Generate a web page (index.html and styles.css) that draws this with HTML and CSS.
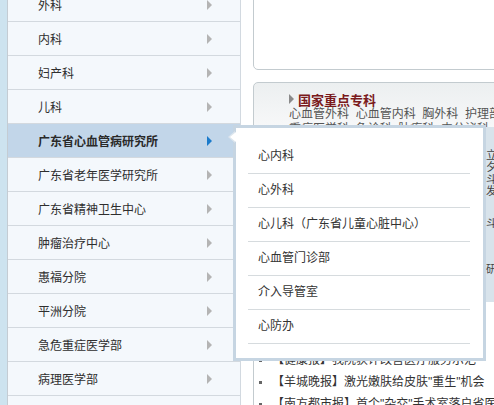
FILE: index.html
```html
<!DOCTYPE html>
<html lang="zh-CN">
<head>
<meta charset="utf-8">
<title>科室导航</title>
<link rel="stylesheet" href="styles.css">
</head>
<body>
<div class="page">
  <aside class="sidebar">
    <div class="strip"></div>
    <ul class="menu">
      <li class="item"><span>外科</span><i class="arrow"></i></li>
      <li class="item"><span>内科</span><i class="arrow"></i></li>
      <li class="item"><span>妇产科</span><i class="arrow"></i></li>
      <li class="item"><span>儿科</span><i class="arrow"></i></li>
      <li class="item active"><span>广东省心血管病研究所</span><i class="arrow"></i></li>
      <li class="item"><span>广东省老年医学研究所</span><i class="arrow"></i></li>
      <li class="item"><span>广东省精神卫生中心</span><i class="arrow"></i></li>
      <li class="item"><span>肿瘤治疗中心</span><i class="arrow"></i></li>
      <li class="item"><span>惠福分院</span><i class="arrow"></i></li>
      <li class="item"><span>平洲分院</span><i class="arrow"></i></li>
      <li class="item"><span>急危重症医学部</span><i class="arrow"></i></li>
      <li class="item"><span>病理医学部</span><i class="arrow"></i></li>
      <li class="item"><span></span></li>
    </ul>
  </aside>

  <main class="main">
    <div class="box box-top"></div>
    <div class="box box-feature">
      <div class="feature-head">
        <h3 class="feature-title"><i class="title-arrow"></i>国家重点专科</h3>
        <p class="feature-line">心血管外科&nbsp;&nbsp;心血管内科&nbsp;&nbsp;胸外科&nbsp;&nbsp;护理部</p>
        <p class="feature-line">重症医学科&nbsp;&nbsp;急诊科&nbsp;&nbsp;肿瘤科&nbsp;&nbsp;内分泌科</p>
      </div>
      <div class="feature-body">
        <div class="feature-left"></div>
        <div class="feature-side">
          <p class="side-a">立</p>
          <p class="side-a">夕</p>
          <p class="side-a">斗</p>
          <p class="side-a">发</p>
          <p class="side-b">斗</p>
          <p class="side-c">研</p>
        </div>
      </div>
      <ul class="news">
        <li>【健康报】我院获评改善医疗服务示范</li>
        <li>【羊城晚报】激光嫩肤给皮肤"重生"机会</li>
        <li>【南方都市报】首个"杂交"手术室落户省医</li>
      </ul>
    </div>
  </main>

  <div class="popup">
    <ul class="sub">
      <li>心内科</li>
      <li>心外科</li>
      <li>心儿科（广东省儿童心脏中心）</li>
      <li>心血管门诊部</li>
      <li>介入导管室</li>
      <li>心防办</li>
    </ul>
  </div>
</div>
</body>
</html>
```
FILE: styles.css
```css
html, body {
  margin: 0;
  padding: 0;
  background: #ffffff;
}
body {
  font-family: "Liberation Sans", "Noto Sans CJK SC", sans-serif;
  font-size: 12px;
  color: #333333;
  width: 494px;
  height: 405px;
  overflow: hidden;
}
ul, p, h3 {
  margin: 0;
  padding: 0;
  list-style: none;
}
.page {
  position: relative;
  display: flex;
  width: 494px;
  height: 405px;
  overflow: hidden;
}

/* sidebar */
.sidebar {
  flex: none;
  display: flex;
  width: 241px;
}
.strip {
  width: 7px;
  background: #cde3ef;
  border-right: 1px solid #c4ccd3;
}
.menu {
  width: 232px;
  margin-top: -12px;
  border-right: 1px solid #d2d9e0;
  background: #f4f8fc;
}
.item {
  display: flex;
  align-items: center;
  justify-content: space-between;
  height: 33px;
  padding: 0 28px 0 30px;
  border-bottom: 1px solid #d3d9df;
  background: #f4f8fc;
  font-size: 12px;
  color: #2e2e2e;
}
.arrow {
  display: block;
  width: 0;
  height: 0;
  border-left: 5px solid #b4b4b4;
  border-top: 5px solid transparent;
  border-bottom: 5px solid transparent;
}
.item.active {
  background: #c2d6e9;
  font-weight: bold;
  color: #2a2a2a;
}
.item.active .arrow {
  border-left-color: #1b7bcb;
}

/* main */
.main {
  flex: 1;
  margin-left: 12px;
  margin-right: -12px;
}
.box {
  border: 1px solid #c3cbcf;
  border-radius: 5px;
  background: #ffffff;
}
.box-top {
  height: 80px;
  margin-top: -10px;
  box-sizing: border-box;
}
.box-feature {
  margin-top: 12px;
  height: 360px;
  background: linear-gradient(180deg, #eceff0 0px, #f6f7f8 40px, #ffffff 60px);
}
.feature-head {
  padding: 8px 0 0 35px;
}
.feature-title {
  display: flex;
  align-items: center;
  gap: 4px;
  height: 16px;
  font-size: 13px;
  font-weight: bold;
  color: #7a1a1c;
}
.title-arrow {
  display: block;
  width: 0;
  height: 0;
  border-left: 5px solid #8a8a8a;
  border-top: 5px solid transparent;
  border-bottom: 5px solid transparent;
}
.feature-line {
  line-height: 15px;
  font-size: 12px;
  color: #555555;
  white-space: nowrap;
}
.feature-body {
  display: flex;
  height: 213px;
  margin-top: -10px;
}
.feature-left {
  flex: 0 0 232px;
}
.feature-side {
  flex: 1;
  height: 175px;
  background: #d8e3eb;
  font-size: 11px;
  color: #444;
  padding-top: 22px;
  box-sizing: border-box;
}
.side-a {
  line-height: 12px;
  height: 12px;
  overflow: hidden;
}
.side-b {
  margin-top: 20px;
  line-height: 12px;
}
.side-c {
  margin-top: 34px;
  line-height: 12px;
}
.news {
  padding-left: 4px;
  margin-top: 9px;
}
.news li {
  position: relative;
  height: 22px;
  line-height: 22px;
  padding-left: 14px;
  font-size: 12px;
  color: #333;
  white-space: nowrap;
}
.news li::before {
  content: "";
  position: absolute;
  left: 1px;
  top: 10px;
  width: 3px;
  height: 3px;
  background: #666666;
}

/* popup submenu */
.popup {
  position: absolute;
  left: 233px;
  top: 125px;
  width: 253px;
  height: 236px;
  box-sizing: border-box;
  border: 3px solid #c6d5e2;
  background: #ffffff;
  padding: 12px 13px 0 12px;
}
.popup::before {
  content: "";
  position: absolute;
  left: -8px;
  top: 3px;
  border-right: 7px solid #dde6ee;
  border-top: 6px solid transparent;
  border-bottom: 6px solid transparent;
}
.popup::after {
  content: "";
  position: absolute;
  left: -6px;
  top: 4px;
  border-right: 6px solid #ffffff;
  border-top: 5px solid transparent;
  border-bottom: 5px solid transparent;
}
.sub li {
  height: 33px;
  line-height: 33px;
  padding-left: 10px;
  border-bottom: 1px solid #d6dbde;
  font-size: 12px;
  color: #333;
  white-space: nowrap;
}
```
